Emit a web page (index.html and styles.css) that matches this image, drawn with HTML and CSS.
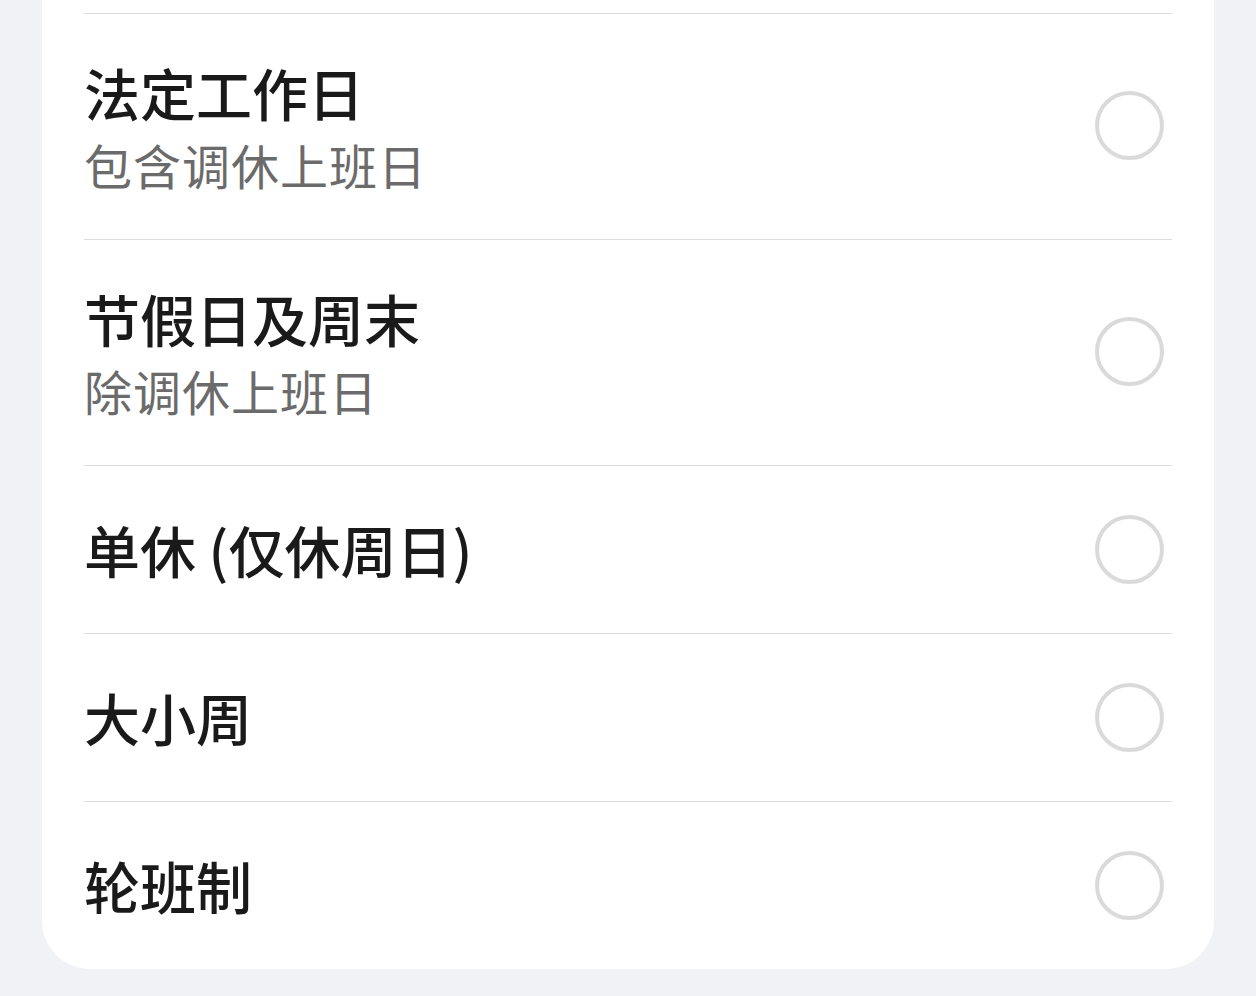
FILE: index.html
```html
<!DOCTYPE html>
<html lang="zh-CN">
<head>
    <meta charset="UTF-8">
    <meta name="viewport" content="width=device-width, initial-scale=1.0">
    <title>工作日设置</title>
    <link rel="stylesheet" href="styles.css">
</head>
<body>
    <div class="card">
        <ul class="option-list">
            <li class="option double">
                <div class="option-text">
                    <div class="option-title">法定工作日</div>
                    <div class="option-sub">包含调休上班日</div>
                </div>
                <span class="radio"></span>
            </li>
            <li class="option double">
                <div class="option-text">
                    <div class="option-title">节假日及周末</div>
                    <div class="option-sub">除调休上班日</div>
                </div>
                <span class="radio"></span>
            </li>
            <li class="option">
                <div class="option-text">
                    <div class="option-title">单休 (仅休周日)</div>
                </div>
                <span class="radio"></span>
            </li>
            <li class="option">
                <div class="option-text">
                    <div class="option-title">大小周</div>
                </div>
                <span class="radio"></span>
            </li>
            <li class="option">
                <div class="option-text">
                    <div class="option-title">轮班制</div>
                </div>
                <span class="radio"></span>
            </li>
        </ul>
    </div>
</body>
</html>
```

FILE: styles.css
```css
html, body {
    margin: 0;
    padding: 0;
}
body {
    background-color: #f1f2f6;
    font-family: "Noto Sans CJK SC", "Noto Sans", sans-serif;
    color: #1a1a1a;
    height: 996px;
    overflow: hidden;
}
.card {
    margin: 0 42px;
    padding: 13px 42px 0;
    background-color: #fff;
    border-radius: 0 0 48px 48px;
}
.option-list {
    list-style: none;
    margin: 0;
    padding: 0;
}
.option {
    display: flex;
    align-items: center;
    justify-content: space-between;
    border-top: 1px solid #dcdcdc;
    padding: 48px 0 49px;
}
.option.double {
    padding: 43px 0 46px;
}
.option-title {
    font-size: 56px;
    font-weight: 500;
    line-height: 70px;
}
.option-sub {
    font-size: 48px;
    line-height: 58px;
    letter-spacing: 1px;
    margin-top: 8px;
    color: #6b6b6b;
}
.radio {
    width: 61px;
    height: 61px;
    border: 4px solid #dadada;
    border-radius: 50%;
    margin-right: 8px;
}
```
